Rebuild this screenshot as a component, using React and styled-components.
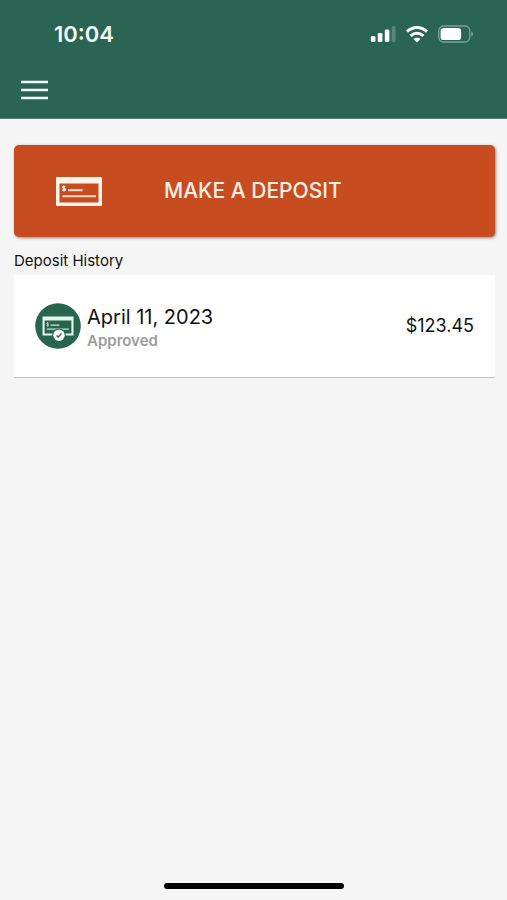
import styled, { createGlobalStyle } from 'styled-components'

const deposits = [
  { id: 1, date: 'April 11, 2023', status: 'Approved', amount: '$123.45' }
]

export default function App () {
  return (
    <>
      <GlobalStyle />
      <Screen>
        <Header>
          <StatusBar>
            <Clock>10:04</Clock>
            <StatusIcons>
              <SignalIcon />
              <WifiIcon />
              <BatteryIcon />
            </StatusIcons>
          </StatusBar>
          <NavBar>
            <MenuButton type="button" aria-label="Menu">
              <MenuIcon />
            </MenuButton>
          </NavBar>
        </Header>
        <Content>
          <DepositButton type="button">
            <CheckIcon />
            <DepositLabel>MAKE A DEPOSIT</DepositLabel>
          </DepositButton>
          <SectionTitle>Deposit History</SectionTitle>
          <HistoryList>
            {deposits.map(({ id, date, status, amount }) => (
              <HistoryItem key={id}>
                <ApprovedIcon />
                <HistoryInfo>
                  <HistoryDate>{date}</HistoryDate>
                  <HistoryStatus>{status}</HistoryStatus>
                </HistoryInfo>
                <Amount>{amount}</Amount>
              </HistoryItem>
            ))}
          </HistoryList>
        </Content>
        <HomeIndicator />
      </Screen>
    </>
  )
}

function SignalIcon () {
  return (
    <svg width="26" height="18" viewBox="0 0 26 18" fill="#fff" aria-hidden="true">
      <rect x="0.8" y="11" width="4.6" height="6" rx="1.3" />
      <rect x="7.8" y="8" width="4.6" height="9" rx="1.3" />
      <rect x="14.8" y="4.5" width="4.6" height="12.5" rx="1.3" />
      <rect x="21.6" y="1" width="4" height="16" rx="1.3" opacity="0.22" />
    </svg>
  )
}

function WifiIcon () {
  return (
    <svg width="22" height="18" viewBox="0 0 22 18" fill="none" stroke="#fff" strokeWidth="3" aria-hidden="true">
      <path d="M1 6.6C6.7 1.1 15.3 1.1 21 6.6" />
      <path d="M4.6 10.8C8.3 7.3 13.7 7.3 17.4 10.8" />
      <path d="M11 17.4L7.5 14C9.4 12.2 12.6 12.2 14.5 14Z" fill="#fff" stroke="none" />
    </svg>
  )
}

function BatteryIcon () {
  return (
    <svg width="36" height="18" viewBox="0 0 36 18" aria-hidden="true">
      <rect x="0.8" y="1" width="31" height="16" rx="4.8" fill="none" stroke="#fff" strokeOpacity="0.4" strokeWidth="1.3" />
      <rect x="2.6" y="3" width="20.5" height="12" rx="2.8" fill="#fff" />
      <path d="M33.4 6.5C35.4 7.2 35.4 10.8 33.4 11.5Z" fill="#fff" fillOpacity="0.45" />
    </svg>
  )
}

function MenuIcon () {
  return (
    <svg width="27" height="20" viewBox="0 0 27 20" stroke="#f2fbf7" strokeWidth="2.4" aria-hidden="true">
      <path d="M0 2H27M0 10H27M0 18H27" />
    </svg>
  )
}

function CheckIcon () {
  return (
    <svg width="46" height="29" viewBox="0 0 46 29" aria-hidden="true">
      <path d="M1 0H45Q46 0 46 1V28Q46 29 45 29H1Q0 29 0 28V1Q0 0 1 0ZM3.5 6.5V25.5H42.5V6.5Z" fill="#fff3ea" fillRule="evenodd" />
      <path d="M9.3 9.9C8.6 9.1 6.6 9.1 6.6 10.3C6.6 11.7 9.5 11 9.5 12.5C9.5 13.8 7.1 13.7 6.3 12.8M8 8.4V14.6" fill="none" stroke="#fff3ea" strokeWidth="1.3" />
      <path d="M12 13.2H26.5" stroke="#ffe4cf" strokeWidth="2" />
      <path d="M6.3 19.2H40" stroke="#ffd9bd" strokeWidth="2" />
    </svg>
  )
}

function ApprovedIcon () {
  return (
    <svg width="46" height="46" viewBox="0 0 46 46" aria-hidden="true">
      <circle cx="23" cy="23" r="22.8" fill="#27654f" />
      <path d="M7.5 13.5H38.5V32.5H7.5ZM9.6 17.6V30.5H36.4V17.6Z" fill="#e3f5ee" fillRule="evenodd" />
      <path d="M13.4 20.2C12.8 19.6 11.8 19.7 11.8 20.5C11.8 21.5 13.6 21.1 13.6 22.2C13.6 23.1 12.2 23.1 11.6 22.5M12.7 19V23.6" fill="none" stroke="#c5e6da" strokeWidth="0.8" />
      <path d="M15.5 22.2H24.5M11.8 26.2H33.8" stroke="#c5e6da" strokeWidth="1.3" />
      <circle cx="24" cy="32.3" r="6.8" fill="#27654f" />
      <circle cx="24" cy="32.3" r="5.7" fill="#fff" />
      <path d="M21.6 32.6L23.2 34.1L26.5 30.6" fill="none" stroke="#27654f" strokeWidth="1.4" />
    </svg>
  )
}

const GlobalStyle = createGlobalStyle`
  * {
    box-sizing: border-box;
  }
  body {
    margin: 0;
    background-color: #f5f5f5;
    color: #111111;
    font-family: Inter, "Liberation Sans", sans-serif;
  }
  button {
    border: none;
    font-family: inherit;
    cursor: pointer;
  }
  svg {
    display: block;
    flex-shrink: 0;
  }
`
const Screen = styled.div`
  min-height: 100vh;
  display: flex;
  flex-direction: column;
`
const Header = styled.header`
  background-color: #2a6452;
  border-bottom: 1px solid #5c8377;
`
const StatusBar = styled.div`
  display: flex;
  justify-content: space-between;
  align-items: center;
  height: 68px;
  padding: 0 33px 0 54px;
`
const Clock = styled.span`
  color: #f2fbf7;
  font-size: 22px;
  font-weight: 600;
  line-height: 28px;
`
const StatusIcons = styled.div`
  display: flex;
  align-items: center;
  gap: 10px;
`
const NavBar = styled.nav`
  display: flex;
  padding: 0 12px 6px;
`
const MenuButton = styled.button`
  padding: 12px 9px;
  background: none;
`
const Content = styled.main`
  flex: 1;
  padding: 26px 12px 24px 14px;
`
const DepositButton = styled.button`
  display: flex;
  align-items: center;
  width: 100%;
  height: 92px;
  padding: 0 42px;
  background-color: #c74c20;
  border-radius: 5px;
  box-shadow: rgba(0, 0, 0, 0.45) 1px 1px 3px;
`
const DepositLabel = styled.span`
  margin-left: 62px;
  color: #fff0e4;
  font-size: 21px;
  font-weight: 500;
  line-height: 28px;
`
const SectionTitle = styled.h2`
  margin: 14px 0 4px;
  font-size: 15px;
  font-weight: 400;
  line-height: 20px;
`
const HistoryList = styled.ul`
  margin: 0;
  padding: 0;
  list-style: none;
`
const HistoryItem = styled.li`
  display: flex;
  align-items: center;
  gap: 6px;
  padding: 26px 21px;
  background-color: #ffffff;
  border-bottom: 1px solid #c4c4c4;
`
const HistoryInfo = styled.div`
  flex: 1;
  padding-top: 2px;
`
const HistoryDate = styled.div`
  font-size: 20px;
  line-height: 28px;
`
const HistoryStatus = styled.div`
  color: #9b9b9b;
  font-size: 15px;
  font-weight: 600;
  line-height: 20px;
`
const Amount = styled.span`
  font-size: 18px;
  line-height: 28px;
`
const HomeIndicator = styled.div`
  align-self: center;
  width: 180px;
  height: 6px;
  margin-bottom: 11px;
  background-color: #000000;
  border-radius: 3px;
`
